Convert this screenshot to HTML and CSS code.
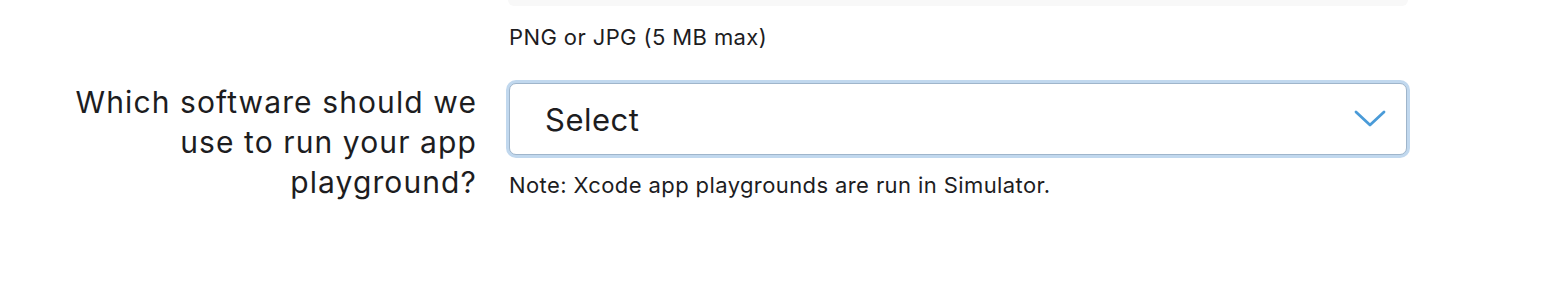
FILE: index.html
```html
<!DOCTYPE html>
<html lang="en">
<head>
    <meta charset="UTF-8">
    <meta name="viewport" content="width=device-width, initial-scale=1.0">
    <title>Submission</title>
    <link rel="stylesheet" href="styles.css">
</head>
<body>
    <div class="row">
        <div class="label"></div>
        <div class="field">
            <div class="dropzone"></div>
            <p class="hint hint-top">PNG or JPG (5 MB max)</p>
        </div>
    </div>

    <div class="row row-select">
        <label class="label" for="software">Which software should we use to run your app playground?</label>
        <div class="field">
            <div class="select-wrap">
                <select id="software" class="select">
                    <option value="">Select</option>
                    <option value="xcode">Xcode</option>
                    <option value="swift-playgrounds">Swift Playgrounds</option>
                </select>
                <svg class="chevron" width="32" height="18" viewBox="0 0 32 18">
                    <path d="M2 2 L16 15 L30 2" fill="none" stroke="#4a9bd8" stroke-width="2.8" stroke-linecap="round" stroke-linejoin="round"/>
                </svg>
            </div>
            <p class="hint">Note: Xcode app playgrounds are run in Simulator.</p>
        </div>
    </div>
</body>
</html>
```

FILE: styles.css
```css
body {
    font-family: Inter, "Noto Sans", sans-serif;
    background-color: #ffffff;
    margin: 0;
    padding: 0;
    color: #1d1d1f;
}
.row {
    display: grid;
    grid-template-columns: 476px 900px;
    column-gap: 32px;
}
.label {
    justify-self: end;
    max-width: 430px;
    text-align: right;
    font-size: 30px;
    letter-spacing: 1.1px;
    line-height: 40px;
    color: #1d1d1f;
}
.row-select {
    margin-top: 31px;
}
.row-select .label {
    padding-top: 2px;
    margin-right: -1px;
}
.dropzone {
    height: 6px;
    background: #f8f8f8;
    border-radius: 0 0 10px 10px;
}
.hint {
    font-size: 22px;
    letter-spacing: 0.4px;
    line-height: 24px;
    margin: 18px 0 0 1px;
    color: #1d1d1f;
}
.hint-top {
    margin-top: 19px;
}
.select-wrap {
    position: relative;
    margin: 3px 1px 0 1px;
}
.select {
    appearance: none;
    -webkit-appearance: none;
    display: block;
    width: 100%;
    height: 72px;
    padding: 0 80px 0 35px;
    font-family: Inter, "Noto Sans", sans-serif;
    font-size: 31px;
    letter-spacing: 0.5px;
    color: #1d1d1f;
    background: #ffffff;
    border: 1px solid #9fb5cb;
    border-radius: 7px;
    box-shadow: 0 0 0 3px #c1d8ee;
    outline: none;
}
.chevron {
    position: absolute;
    right: 21px;
    top: 27px;
}
.row-select .hint {
    margin-top: 18px;
}
```
